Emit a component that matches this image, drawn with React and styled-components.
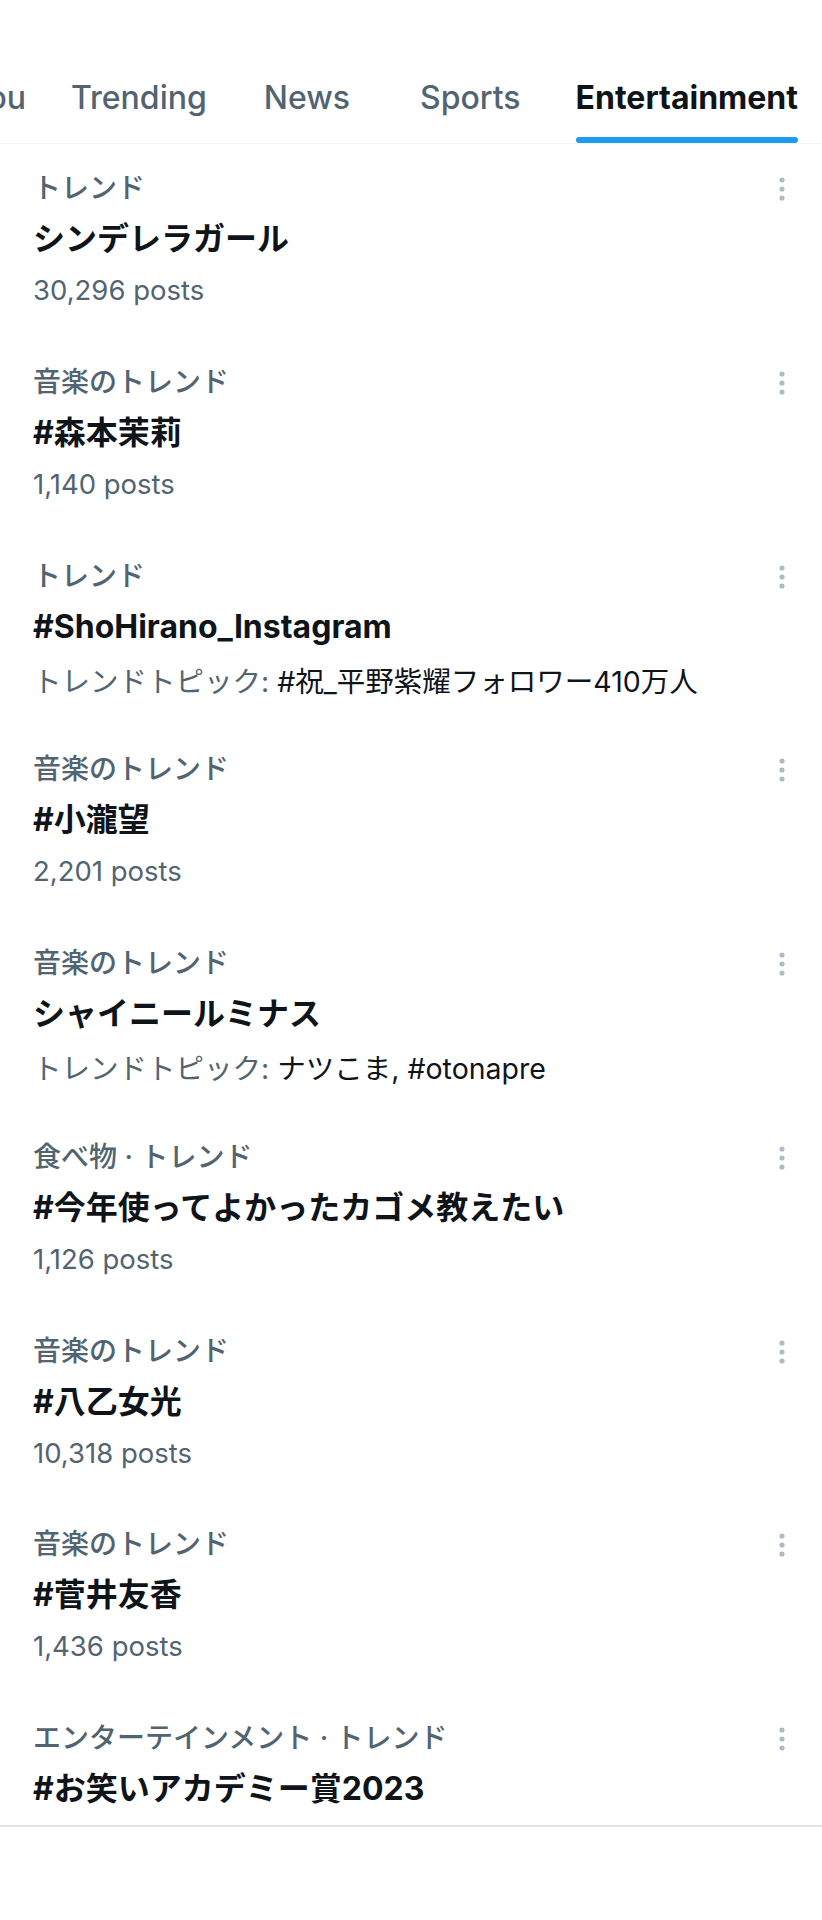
import React from "react";
import styled, { createGlobalStyle } from "styled-components";

const FONT = `Inter, "Noto Sans CJK JP", sans-serif`;

const Global = createGlobalStyle`
  html, body { margin: 0; padding: 0; background: #ffffff; }
  body { font-family: ${FONT}; -webkit-font-smoothing: antialiased; }
  * { box-sizing: border-box; }
`;

const Page = styled.div`
  width: 822px;
  min-height: 1920px;
  background: #ffffff;
  font-family: ${FONT};
`;

const TabBar = styled.nav`
  margin-top: 58px;
  display: flex;
  justify-content: flex-end;
  overflow: hidden;
  padding-right: 24px;
  border-bottom: 1px solid #eff3f4;
`;

const Tab = styled.div`
  flex: 0 0 auto;
  height: 85px;
  margin-left: ${(p) => p.$gap || 0}px;
  display: flex;
  flex-direction: column;
`;

const TabLabel = styled.span`
  flex: 1;
  display: flex;
  align-items: center;
  font-size: 32px;
  font-weight: ${(p) => (p.$active ? 700 : 500)};
  color: ${(p) => (p.$active ? "#0f1419" : "#536471")};
  white-space: nowrap;
`;

const Indicator = styled.span`
  height: 6px;
  border-radius: 3px;
  background: ${(p) => (p.$active ? "#1d9bf0" : "transparent")};
`;

const List = styled.section`
  border-bottom: 2px solid #e3e3e3;
`;

const Item = styled.article`
  position: relative;
  padding: 24px 33px ${(p) => (p.$last ? "5px" : "27.75px")} 33px;
`;

const Category = styled.div`
  font-size: 28px;
  line-height: 40px;
  font-weight: 500;
  color: #536471;
  white-space: nowrap;
`;

const Title = styled.div`
  font-size: 32px;
  line-height: 62px;
  font-weight: 700;
  color: #0f1419;
  white-space: nowrap;
`;

const Meta = styled.div`
  font-size: ${(p) => (p.$topic ? "28.5px" : "27.5px")};
  line-height: 40px;
  color: #536471;
  white-space: nowrap;
  margin-top: ${(p) => (p.$topic ? "4px" : "0")};
  margin-bottom: ${(p) => (p.$topic ? "-4px" : "0")};
`;

const TopicText = styled.span`
  color: #0f1419;
`;

const MoreButton = styled.button`
  position: absolute;
  top: 25px;
  right: 26px;
  width: 28px;
  height: 40px;
  padding: 0;
  border: none;
  background: transparent;
  display: flex;
  align-items: center;
  justify-content: center;
`;

const Dots = () => (
  <svg width="6" height="24" viewBox="0 0 6 24" aria-hidden="true">
    <circle cx="3" cy="3" r="2.6" fill="#aebac4" />
    <circle cx="3" cy="12" r="2.6" fill="#aebac4" />
    <circle cx="3" cy="21" r="2.6" fill="#aebac4" />
  </svg>
);

const tabs = [
  { label: "For you", gap: 0 },
  { label: "Trending", gap: 45 },
  { label: "News", gap: 57 },
  { label: "Sports", gap: 70 },
  { label: "Entertainment", gap: 55, active: true },
];

const trends = [
  { cat: "トレンド", title: "シンデレラガール", posts: "30,296 posts" },
  { cat: "音楽のトレンド", title: "#森本茉莉", posts: "1,140 posts" },
  { cat: "トレンド", title: "#ShoHirano_Instagram", topic: "#祝_平野紫耀フォロワー410万人" },
  { cat: "音楽のトレンド", title: "#小瀧望", posts: "2,201 posts" },
  { cat: "音楽のトレンド", title: "シャイニールミナス", topic: "ナツこま, #otonapre" },
  { cat: "食べ物 · トレンド", title: "#今年使ってよかったカゴメ教えたい", posts: "1,126 posts" },
  { cat: "音楽のトレンド", title: "#八乙女光", posts: "10,318 posts" },
  { cat: "音楽のトレンド", title: "#菅井友香", posts: "1,436 posts" },
  { cat: "エンターテインメント · トレンド", title: "#お笑いアカデミー賞2023" },
];

export default function App() {
  return (
    <Page>
      <Global />
      <TabBar>
        {tabs.map((t) => (
          <Tab key={t.label} $gap={t.gap}>
            <TabLabel $active={t.active}>{t.label}</TabLabel>
            <Indicator $active={t.active} />
          </Tab>
        ))}
      </TabBar>
      <List>
        {trends.map((t, i) => (
          <Item key={i} $last={i === trends.length - 1}>
            <Category>{t.cat}</Category>
            <Title>{t.title}</Title>
            {t.posts && <Meta>{t.posts}</Meta>}
            {t.topic && (
              <Meta $topic>
                トレンドトピック: <TopicText>{t.topic}</TopicText>
              </Meta>
            )}
            <MoreButton aria-label="More">
              <Dots />
            </MoreButton>
          </Item>
        ))}
      </List>
    </Page>
  );
}
